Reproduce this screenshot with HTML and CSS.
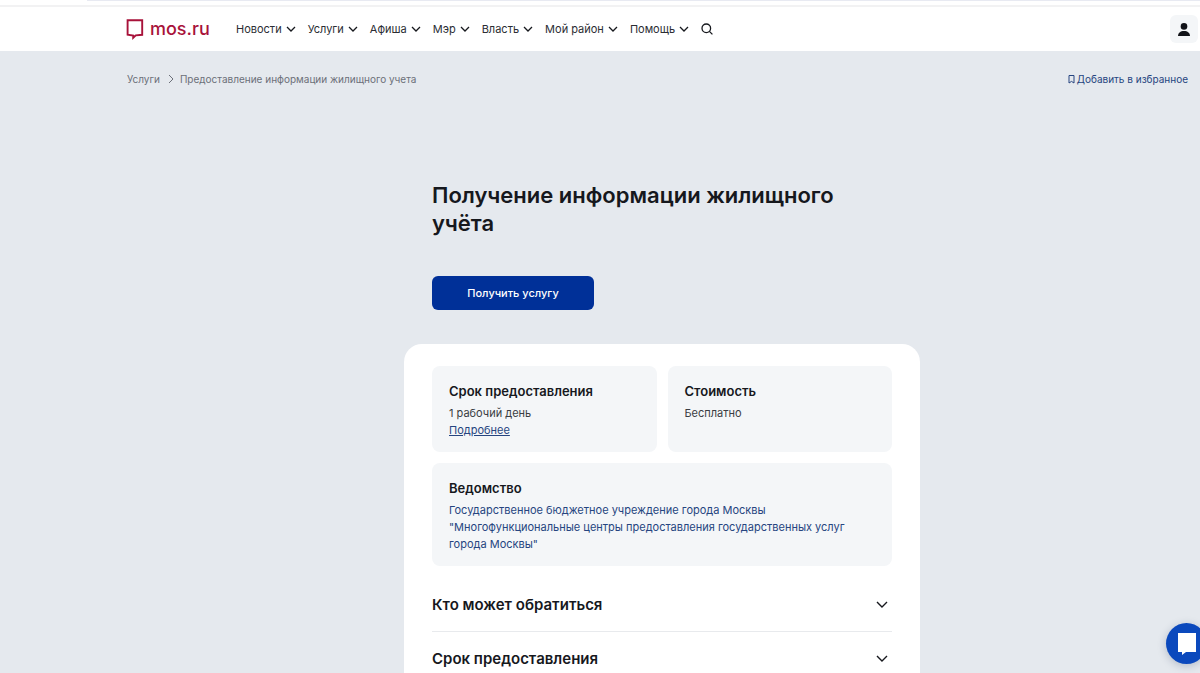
FILE: index.html
```html
<!DOCTYPE html>
<html lang="ru">
<head>
<meta charset="utf-8">
<title>Получение информации жилищного учёта</title>
<link rel="stylesheet" href="styles.css">
</head>
<body>
<svg class="sprite" aria-hidden="true">
  <symbol id="chevron" viewBox="0 0 10 6"><path d="M1 1l4 4 4-4" fill="none" stroke="currentColor" stroke-width="1.3"/></symbol>
</svg>
<div class="topline"><div class="topline-edge"></div></div>
<header class="header">
  <a class="logo" href="#">
    <svg class="logo-mark" viewBox="0 0 18 21" aria-hidden="true"><path d="M1.6 1.2h14.6v14.6l-6.4.6-2.6 2.4v-2.2l-5.6-.8z" fill="none" stroke="currentColor" stroke-width="1.9"/></svg>
    <span>mos.ru</span>
  </a>
  <nav class="nav">
    <button class="nav-item" type="button">Новости<svg class="chevron" aria-hidden="true"><use href="#chevron"/></svg></button>
    <button class="nav-item" type="button">Услуги<svg class="chevron" aria-hidden="true"><use href="#chevron"/></svg></button>
    <button class="nav-item" type="button">Афиша<svg class="chevron" aria-hidden="true"><use href="#chevron"/></svg></button>
    <button class="nav-item" type="button">Мэр<svg class="chevron" aria-hidden="true"><use href="#chevron"/></svg></button>
    <button class="nav-item" type="button">Власть<svg class="chevron" aria-hidden="true"><use href="#chevron"/></svg></button>
    <button class="nav-item" type="button">Мой район<svg class="chevron" aria-hidden="true"><use href="#chevron"/></svg></button>
    <button class="nav-item" type="button">Помощь<svg class="chevron" aria-hidden="true"><use href="#chevron"/></svg></button>
    <button class="nav-item" type="button" aria-label="Поиск"><svg class="search-icon" viewBox="0 0 12 12" aria-hidden="true"><circle cx="5.3" cy="5.3" r="4.3"/><path d="M8.4 8.4l3 3"/></svg></button>
  </nav>
  <button class="user" type="button" aria-label="Личный кабинет"><svg class="user-icon" viewBox="0 0 12 13" aria-hidden="true"><circle cx="6" cy="3.4" r="3.3"/><path d="M0 13c0-3 2.4-5 6-5s6 2 6 5z"/></svg></button>
</header>
<main class="page">
  <div class="toolbar">
    <nav class="crumbs" aria-label="Навигация">
      <a href="#">Услуги</a>
      <svg class="crumb-arrow" viewBox="0 0 6 10" aria-hidden="true"><path d="M1 1l4 4-4 4"/></svg>
      <span>Предоставление информации жилищного учета</span>
    </nav>
    <a class="favorite" href="#"><svg class="bookmark" viewBox="0 0 7 9" aria-hidden="true"><path d="M1 .5h5v7.5L3.5 6.4 1 8z"/></svg>Добавить в избранное</a>
  </div>
  <div class="content">
    <article class="service">
      <div class="intro">
        <h1 class="title">Получение информации жилищного учёта</h1>
        <button class="primary" type="button">Получить услугу</button>
      </div>
      <div class="sheet">
        <div class="facts">
          <section class="fact">
            <h2 class="fact-title">Срок предоставления</h2>
            <p class="fact-text">1 рабочий день</p>
            <a class="more" href="#">Подробнее</a>
          </section>
          <section class="fact">
            <h2 class="fact-title">Стоимость</h2>
            <p class="fact-text">Бесплатно</p>
          </section>
          <section class="fact fact-wide">
            <h2 class="fact-title">Ведомство</h2>
            <a class="agency" href="#">Государственное бюджетное учреждение города Москвы "Многофункциональные центры предоставления государственных услуг города Москвы"</a>
          </section>
        </div>
        <button class="accordion" type="button">Кто может обратиться<svg class="accordion-arrow" viewBox="0 0 12 8" aria-hidden="true"><path d="M1 1l5 5 5-5"/></svg></button>
        <button class="accordion" type="button">Срок предоставления<svg class="accordion-arrow" viewBox="0 0 12 8" aria-hidden="true"><path d="M1 1l5 5 5-5"/></svg></button>
      </div>
    </article>
  </div>
</main>
<button class="chat" type="button" aria-label="Чат"><svg class="chat-icon" viewBox="0 0 18 22" aria-hidden="true"><path d="M0 0h18v19H8l-4 3v-3H0z"/></svg></button>
</body>
</html>
```
FILE: styles.css
```css
* { box-sizing: border-box; }
body {
  margin: 0;
  min-height: 100vh;
  display: flex;
  flex-direction: column;
  overflow: hidden;
  font-family: Inter, "Noto Sans", sans-serif;
  font-size: 11px;
  color: #16181d;
  background: #e5e9ee;
}
h1, h2, p { margin: 0; }
button { font: inherit; color: inherit; border: 0; background: none; padding: 0; cursor: pointer; }
a { color: inherit; text-decoration: none; }
svg { flex: none; fill: none; stroke: currentColor; }
.sprite { display: none; }
.topline { height: 7px; background: #fff; border-bottom: 2px solid #f2f2f3; padding-left: 87px; }
.topline-edge { height: 1px; background: #e8eaf2; }
.header { height: 44px; display: flex; align-items: center; background: #fff; padding: 0 2px 0 126px; }
.logo { display: flex; align-items: center; gap: 6px; width: 110px; color: #a8123a; font-size: 18px; line-height: 22px; font-weight: 500; }
.logo-mark { width: 18px; height: 21px; }
.nav { display: flex; align-items: center; gap: 12px; flex: 1; }
.nav-item { display: flex; align-items: center; gap: 4px; line-height: 20px; white-space: nowrap; color: #2b2d33; }
.chevron { width: 10px; height: 6px; color: #16181d; }
.search-icon { width: 12px; height: 12px; stroke-width: 1.3; color: #16181d; }
.user { width: 28px; height: 28px; display: grid; place-items: center; border-radius: 6px; background: #f4f6f8; }
.user-icon { width: 12px; height: 13px; fill: #111318; stroke: none; }
.page { flex: 1; }
.toolbar { display: flex; justify-content: space-between; align-items: center; height: 56px; padding: 0 12px 0 127px; font-size: 10px; }
.crumbs { display: flex; align-items: center; gap: 6px; color: #6c7079; }
.crumb-arrow { width: 6px; height: 10px; margin-left: 2px; }
.favorite { display: flex; align-items: center; gap: 2px; color: #264580; }
.bookmark { width: 7px; height: 9px; }
.content { padding-left: 124px; }
.service { max-width: 516px; margin: 0 auto; }
.intro { padding: 74px 28px 34px; }
.title { font-size: 22px; line-height: 28px; font-weight: 600; }
.primary { display: block; margin-top: 39px; width: 162px; height: 34px; border-radius: 6px; background: #003098; color: #fff; font-weight: 500; }
.sheet { background: #fff; border-radius: 18px 18px 0 0; padding: 22px 28px 0; }
.facts { display: grid; grid-template-columns: 1fr 1fr; gap: 11px; margin-bottom: 12px; }
.fact { padding: 16px 16px 13px 17px; border-radius: 8px; background: #f4f6f8; line-height: 17px; }
.fact-wide { grid-column: 1 / -1; }
.fact-title { font-size: 13px; line-height: 18px; font-weight: 600; margin-bottom: 5px; }
.fact-text { color: #3a3d43; }
.more, .agency { color: #264580; }
.more { text-decoration: underline; }
.accordion { display: flex; width: 100%; height: 54px; align-items: center; justify-content: space-between; padding-right: 4px; border-bottom: 1px solid #e8eaed; font-size: 15px; font-weight: 600; }
.accordion-arrow { width: 12px; height: 8px; stroke-width: 1.4; }
.chat { position: fixed; right: -7px; bottom: 9px; width: 41px; height: 41px; display: grid; place-items: center; border-radius: 50%; background: #0b49bd; box-shadow: 0 2px 8px rgb(30 50 90 / 25%); }
.chat-icon { width: 18px; height: 22px; fill: #fff; stroke: none; }
```
